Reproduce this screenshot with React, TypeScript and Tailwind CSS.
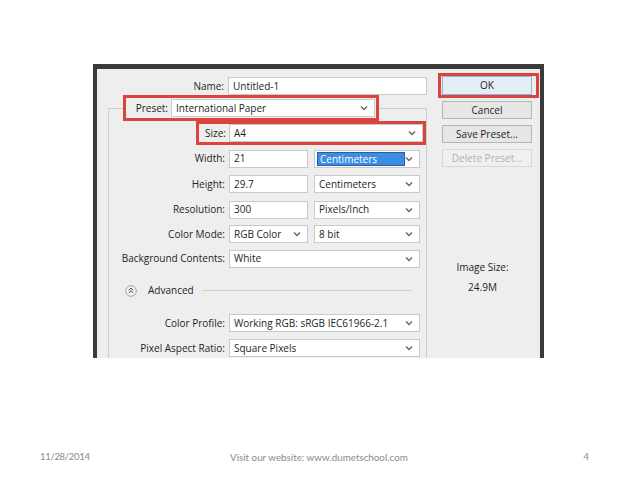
import React from "react";

function Chevron() {
  return (
    <svg width="8" height="6" viewBox="0 0 8 6" className="shrink-0">
      <path d="M1 1.5 L4 4.5 L7 1.5" fill="none" stroke="#666" strokeWidth="1.4" />
    </svg>
  );
}

function Select({ w, text, highlight }: { w: string; text: string; highlight?: boolean }) {
  return (
    <div className={`${w} h-[18px] bg-white border border-[#c9c9c9] flex items-center pl-[2px] pr-[6px]`}>
      <div className="flex-1 min-w-0 flex items-center">
        {highlight ? (
          <span className="bg-[#3b8ee2] text-white border border-[#2a5f9e] pl-[2px] pr-[2px] w-[88px] h-[14px] leading-[12px]">
            {text}
          </span>
        ) : (
          <span className="pl-[2px] whitespace-nowrap">{text}</span>
        )}
      </div>
      <Chevron />
    </div>
  );
}

function Input({ w, text }: { w: string; text: string }) {
  return (
    <div className={`${w} h-[18px] bg-white border border-[#c9c9c9] flex items-center pl-[4px]`}>
      {text}
    </div>
  );
}

function Row({ h, label, children }: { h: string; label: string; children: React.ReactNode }) {
  return (
    <div className={`${h} shrink-0 flex items-center`}>
      <div className="w-[116px] text-right whitespace-nowrap">{label}</div>
      <div className="ml-[4px] flex items-center">{children}</div>
    </div>
  );
}

function Btn({ text, disabled, primary }: { text: string; disabled?: boolean; primary?: boolean }) {
  return (
    <div
      className={`w-[90px] ${primary ? "h-[19px]" : "h-[18px]"} flex items-center justify-center border ${
        disabled
          ? "border-[#d8d8d8] bg-[#f0f0f0] text-[#b0b0b0]"
          : primary
          ? "border-[#8fb7d8] bg-[#e4eef6] text-[#1e1e1e]"
          : "border-[#b5b5b5] bg-[#e6e6e6] text-[#1e1e1e]"
      }`}
    >
      {text}
    </div>
  );
}

export default function App() {
  return (
    <div className="w-[638px] h-[479px] bg-white overflow-hidden">
      <div className="pt-[64px] pl-[93px]">
        <div className="w-[451px] h-[294px] bg-[#3a3a3a] pt-[5px] px-[4px] font-['Open_Sans',sans-serif] text-[10px] text-[#1e1e1e]">
          <div className="flex h-full bg-[#eeeeee] overflow-hidden">
            {/* left panel */}
            <div className="w-[330px] shrink-0 pt-[6px] pl-[11px]">
              <div className="h-[22px] flex items-center">
                <div className="w-[117px] text-right">Name:</div>
                <div className="ml-[4px]">
                  <Input w="w-[199px]" text="Untitled-1" />
                </div>
              </div>
              <div className="mt-[11px] w-[319px] border-t border-l border-r border-[#cfcfcf] flex flex-col h-[262px]">
                {/* Preset */}
                <div className="-mt-[14px] h-[26px] shrink-0 flex">
                  <div className="ml-[14px] w-[256px] h-[26px] border-[3px] border-[#d9443f] bg-[#eeeeee] flex items-center">
                    <div className="w-[42px] text-right">Preset:</div>
                    <div className="ml-[3px]">
                      <Select w="w-[204px]" text="International Paper" />
                    </div>
                  </div>
                </div>
                {/* Size */}
                <div className="h-[25px] shrink-0 flex">
                  <div className="ml-[87px] w-[232px] h-[24px] border-[3px] border-[#d9443f] flex items-center">
                    <div className="w-[27px] text-right">Size:</div>
                    <div className="ml-[3px]">
                      <Select w="w-[194px]" text="A4" />
                    </div>
                  </div>
                </div>
                <Row h="h-[25px]" label="Width:">
                  <Input w="w-[79px]" text="21" />
                  <div className="ml-[6px]">
                    <Select w="w-[106px]" text="Centimeters" highlight />
                  </div>
                </Row>
                <Row h="h-[26px]" label="Height:">
                  <Input w="w-[79px]" text="29.7" />
                  <div className="ml-[6px]">
                    <Select w="w-[106px]" text="Centimeters" />
                  </div>
                </Row>
                <Row h="h-[25px]" label="Resolution:">
                  <Input w="w-[79px]" text="300" />
                  <div className="ml-[6px]">
                    <Select w="w-[106px]" text="Pixels/Inch" />
                  </div>
                </Row>
                <Row h="h-[24px]" label="Color Mode:">
                  <Select w="w-[79px]" text="RGB Color" />
                  <div className="ml-[6px]">
                    <Select w="w-[106px]" text="8 bit" />
                  </div>
                </Row>
                <Row h="h-[25px]" label="Background Contents:">
                  <Select w="w-[191px]" text="White" />
                </Row>
                <div className="h-[39px] shrink-0 flex items-center">
                  <svg width="12" height="12" viewBox="0 0 12 12" className="ml-[16px] shrink-0">
                    <circle cx="6" cy="6" r="5.3" fill="#f4f4f4" stroke="#9a9a9a" strokeWidth="0.9" />
                    <path d="M3.8 5.2 L6 3.2 L8.2 5.2 M3.8 7.8 L6 5.8 L8.2 7.8" fill="none" stroke="#444" strokeWidth="1" />
                  </svg>
                  <span className="ml-[11px]">Advanced</span>
                  <div className="flex-1 ml-[8px] mr-[14px] h-px bg-[#cfcfcf]" />
                </div>
                <Row h="h-[26px]" label="Color Profile:">
                  <Select w="w-[191px]" text="Working RGB:  sRGB IEC61966-2.1" />
                </Row>
                <Row h="h-[24px]" label="Pixel Aspect Ratio:">
                  <Select w="w-[191px]" text="Square Pixels" />
                </Row>
              </div>
            </div>
            {/* right panel */}
            <div className="w-[113px] shrink-0 pt-[4px] flex flex-col">
              <div className="ml-[11px] w-[101px] h-[25px] shrink-0 border-[3px] border-[#d9443f] flex items-center">
                <div className="ml-[1px]">
                  <Btn text="OK" primary />
                </div>
              </div>
              <div className="ml-[15px] mt-[3px] flex flex-col gap-[6px]">
                <Btn text="Cancel" />
                <Btn text="Save Preset..." />
                <Btn text="Delete Preset..." disabled />
              </div>
              <div className="mt-[93px] text-center leading-[14px] pr-[2px]">
                <div>Image Size:</div>
                <div className="mt-[6px]">24.9M</div>
              </div>
            </div>
          </div>
        </div>
      </div>
      <div className="mt-[92px] h-[14px] flex items-center font-['Lato',sans-serif] text-[9.5px] text-[#8a8a8a] pl-[40px] pr-[49px]">
        <div className="w-[190px] tracking-[-0.3px]">11/28/2014</div>
        <div className="text-[9.8px]">Visit our website: www.dumetschool.com</div>
        <div className="ml-auto">4</div>
      </div>
    </div>
  );
}
